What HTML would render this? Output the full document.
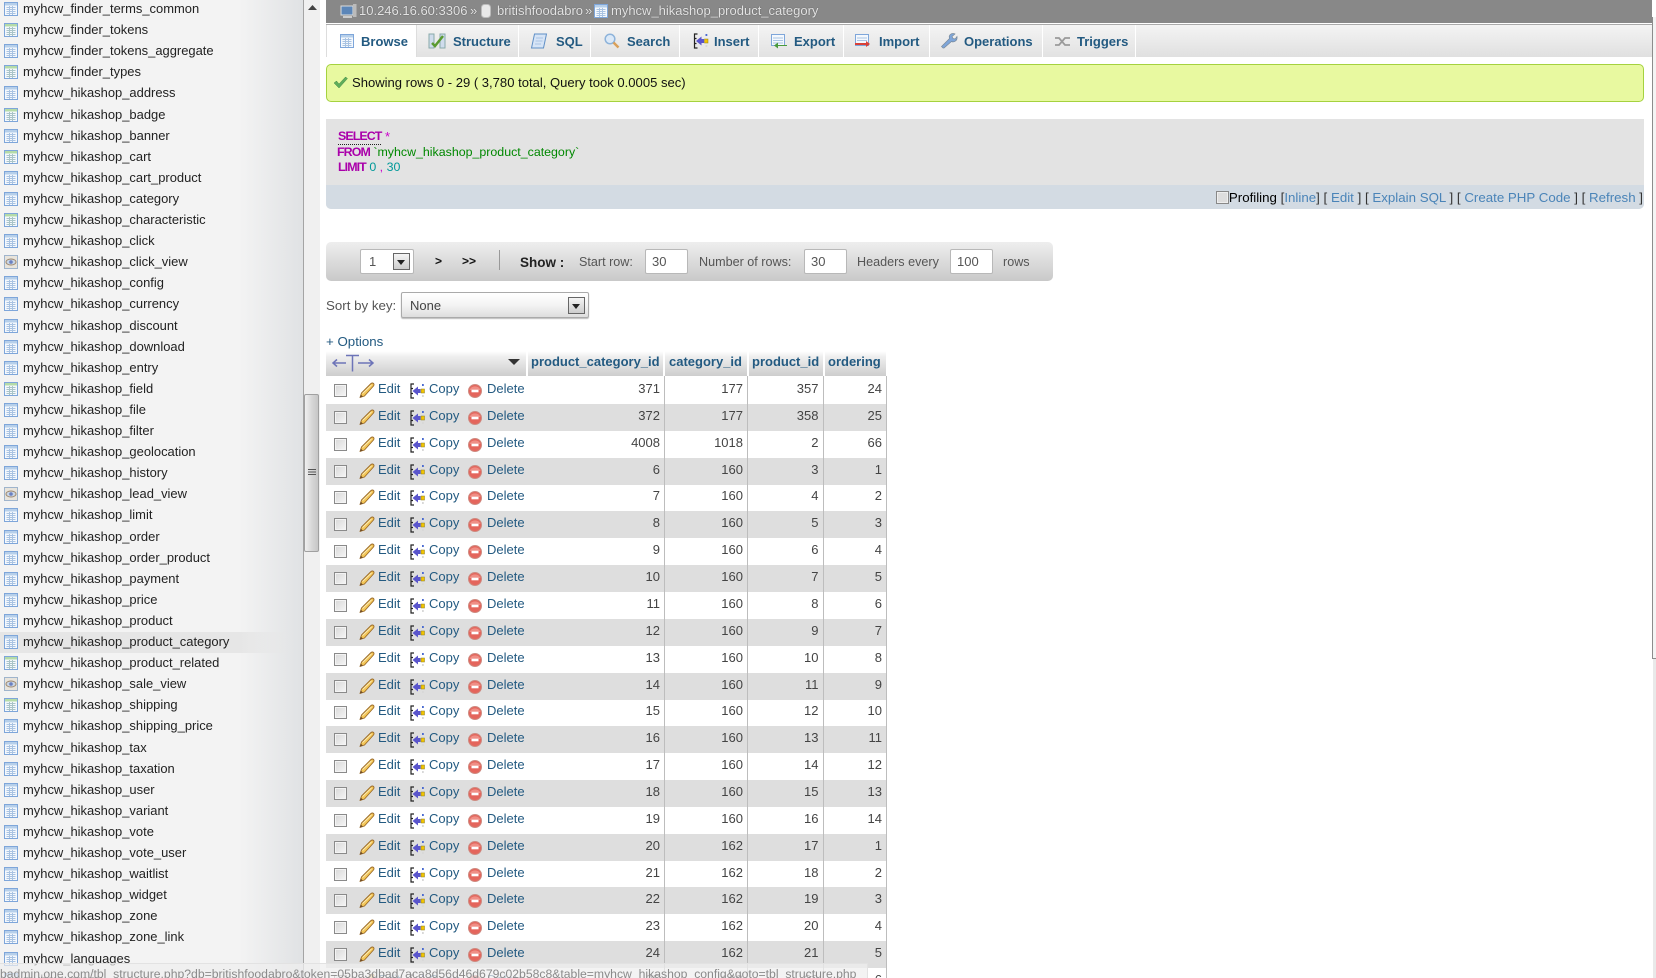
<!DOCTYPE html>
<html><head><meta charset="utf-8"><title>phpMyAdmin</title>
<style>
*{box-sizing:border-box}
html,body{margin:0;padding:0;width:1656px;height:978px;overflow:hidden;background:#fff}
body{position:relative;font:13px/15px "Liberation Sans",Arial,sans-serif;color:#444}
svg{position:absolute;overflow:visible}
.a{position:absolute;white-space:nowrap}
#side{position:absolute;left:0;top:0;width:304px;height:978px;background:linear-gradient(90deg,#f3f3f3 0,#f3f3f3 240px,#e0e2e4 303px);border-right:1px solid #a4a4a4;overflow:hidden}
#side .s{position:absolute;left:23px;color:#222;white-space:nowrap;height:15px;font-size:12.95px;margin-top:-1px}
#side svg{left:4px;width:14px;height:14px}
#hl{position:absolute;left:0;top:632px;width:295px;height:21px;background:linear-gradient(90deg,#e6e6e6 0,#e6e6e6 240px,rgba(230,230,230,0) 295px)}
#sb{position:absolute;left:304px;top:0;width:16px;height:978px;background:#f0f0f0}
#th{position:absolute;left:304px;top:394px;width:15px;height:158px;border:1px solid #a0a0a0;border-radius:2px;background:linear-gradient(90deg,#f0f0f0,#d8d8d8 50%,#c6c6c6)}
#topb{position:absolute;left:326px;top:0;width:1326px;height:23px;background:#888}
#topl{position:absolute;left:326px;top:23px;width:1326px;height:2px;background:#fff;border-bottom:1px solid #aaa}
#tabs{position:absolute;left:326px;top:25px;width:1326px;height:32px;background:linear-gradient(#f4f4f4,#e0e0e0)}
.tb{position:absolute;top:25px;height:32px;background:linear-gradient(#f4f4f4,#e2e2e2);border-right:1px solid #fff}
.tt{position:absolute;top:34px;font-weight:bold;color:#235a81;white-space:nowrap}
.ti{position:absolute;top:33px;width:16px;height:16px}
.w{color:#e4e4e4;text-shadow:0 0 1px #444;top:3px}
#ok{position:absolute;left:326px;top:64px;width:1318px;height:38px;background:#e8f9a0;border:1px solid #a5d23f;border-radius:5px}
#sq{position:absolute;left:326px;top:119px;width:1318px;height:90px;background:#e3e3e3;border-radius:0 0 5px 5px;overflow:hidden}
#sq div{position:absolute;left:0;top:66px;width:100%;height:24px;background:#d3dbe3}
.kw{color:#a0a;font-weight:bold;letter-spacing:-.9px}
.lk{color:#4a84b8}
.br{color:#333}
#nav{position:absolute;left:326px;top:242px;width:727px;height:39px;border-radius:5px;background:linear-gradient(#eee,#c9c9c9)}
.in{position:absolute;top:249px;height:25px;background:#fff;border:1px solid #b8b8b8;border-radius:2px;color:#555;padding:4px 0 0 6px;width:43px}
.ar{position:absolute;background:linear-gradient(#f4f4f4,#ccc);border:1px solid #666}
.ar:after{content:"";position:absolute;left:3px;top:6px;border:4px solid transparent;border-top:5px solid #222;border-bottom:0}
.ne{color:#555;font-size:12.6px}
#hd{position:absolute;left:326px;top:351px;width:560px;height:25px;background:linear-gradient(#fff,#f0f0f0 20%,#cdcdcd)}
.ht{position:absolute;top:354px;font-weight:bold;color:#235a81;white-space:nowrap}
.vs{position:absolute;top:351px;width:2px;height:25px;background:#fff}
.r{position:absolute;left:326px;width:560px;height:27px}
.g{background:#dedede}
.r>*{position:absolute}
.c{left:8px;top:7px;width:13px;height:13px;border:1px solid #8a8a8a;background:linear-gradient(135deg,#d8d8d8,#f6f6f6);box-shadow:inset 0 0 0 1px #f4f4f4}
.r span{top:4px;color:#235a81;white-space:nowrap}
.r b{font-weight:normal;top:4px;text-align:right;width:80px;color:#444}
.r .e{left:52px}.r .co{left:103px}.r .de{left:161px}
.p{left:33px;top:5px;width:16px;height:16px}
.y{left:84px;top:6px;width:15px;height:16px}
.x{left:142px;top:7px;width:14px;height:14px}
.n1{left:254px}.n2{left:337px}.n3{left:412.5px}.n4{left:476px}
.cl{position:absolute;top:376px;width:1px;height:602px;background:#bdbdbd}
#st{position:absolute;left:0;top:963px;width:868px;height:15px;background:rgba(238,238,238,.72);border-top:1px solid #e2e2e2;border-right:1px solid #e2e2e2;color:#8a8a8a;overflow:hidden;white-space:nowrap;font-size:12.2px}
#st span{position:absolute;left:0;top:3px}
</style></head><body>
<svg width="0" height="0" style="position:absolute"><defs>
<symbol id="t" viewBox="0 0 14 14"><rect x=".5" y=".5" width="13" height="13" fill="#f4f8fd" stroke="#7ea6da"/><rect x="1" y="1" width="12" height="2.5" fill="#b6cfea"/><path d="M2.5 5.5h9M2.5 7.5h9M2.5 9.5h9M2.5 11.5h9M5.5 4v9M8.5 4v9" stroke="#a9c3e2" fill="none"/></symbol>
<symbol id="tg" viewBox="0 0 14 14"><rect x=".5" y=".5" width="13" height="13" fill="#f4f8fd" stroke="#7ea6da"/><rect x="1" y="1" width="12" height="2.5" fill="#b4dba8"/><path d="M2.5 5.5h9M2.5 7.5h9M2.5 9.5h9M2.5 11.5h9M5.5 4v9M8.5 4v9" stroke="#a9c4c8" fill="none"/></symbol>
<symbol id="v" viewBox="0 0 14 14"><rect x=".5" y=".5" width="13" height="13" fill="#e8e4dc" stroke="#9fb4cc"/><ellipse cx="7" cy="7" rx="5" ry="3" fill="#c9d6e6" stroke="#a08a70"/><circle cx="7" cy="7" r="1.8" fill="#6a7fc0"/></symbol>
<symbol id="p" viewBox="0 0 16 16"><path d="M1 15.500l1.500-4.500L12 1.500q1.500-1 2.500 0t0 2.500L5.500 14z" fill="#f3c658" stroke="#9a6a28" stroke-width=".9" stroke-linejoin="round"/><path d="M3.500 11.500L12.500 3" stroke="#fbeab4" fill="none"/><path d="M1 15.500l.9-2.800 1.900 1.700z" fill="#6b4a28"/></symbol>
<symbol id="y" viewBox="0 0 15 16"><path d="M4 1H1v14h3M1 5.500h2M1 10.500h2" stroke="#222" fill="none" stroke-width="1.2"/><path d="M2.500 8L8 3.500V6h2.500v4H8v2.500z" fill="#5a55cc"/><rect x="11" y="6" width="3.500" height="4" fill="#f2c400" stroke="#8a7a20" stroke-width=".5"/><rect x="12" y="1" width="1.800" height="2" fill="#4a6ad0"/><rect x="12" y="12" width="1.800" height="2" fill="#d8d8d8"/></symbol>
<symbol id="x" viewBox="0 0 14 14"><circle cx="7" cy="7" r="6.500" fill="#e4655c" stroke="#ce8a80"/><path d="M1.500 6a6 6 0 0 1 11 0z" fill="#ef8f86"/><rect x="3.500" y="5.700" width="7" height="2.600" fill="#fff"/></symbol>
</defs></svg>

<div id="side"><div id="hl"></div>
<svg style="top:2px"><use href="#t"/></svg><div class="s" style="top:2px">myhcw_finder_terms_common</div>
<svg style="top:23px"><use href="#tg"/></svg><div class="s" style="top:23px">myhcw_finder_tokens</div>
<svg style="top:44px"><use href="#t"/></svg><div class="s" style="top:44px">myhcw_finder_tokens_aggregate</div>
<svg style="top:65px"><use href="#tg"/></svg><div class="s" style="top:65px">myhcw_finder_types</div>
<svg style="top:86px"><use href="#t"/></svg><div class="s" style="top:86px">myhcw_hikashop_address</div>
<svg style="top:108px"><use href="#tg"/></svg><div class="s" style="top:108px">myhcw_hikashop_badge</div>
<svg style="top:129px"><use href="#t"/></svg><div class="s" style="top:129px">myhcw_hikashop_banner</div>
<svg style="top:150px"><use href="#tg"/></svg><div class="s" style="top:150px">myhcw_hikashop_cart</div>
<svg style="top:171px"><use href="#t"/></svg><div class="s" style="top:171px">myhcw_hikashop_cart_product</div>
<svg style="top:192px"><use href="#t"/></svg><div class="s" style="top:192px">myhcw_hikashop_category</div>
<svg style="top:213px"><use href="#tg"/></svg><div class="s" style="top:213px">myhcw_hikashop_characteristic</div>
<svg style="top:234px"><use href="#t"/></svg><div class="s" style="top:234px">myhcw_hikashop_click</div>
<svg style="top:255px"><use href="#v"/></svg><div class="s" style="top:255px">myhcw_hikashop_click_view</div>
<svg style="top:276px"><use href="#t"/></svg><div class="s" style="top:276px">myhcw_hikashop_config</div>
<svg style="top:297px"><use href="#t"/></svg><div class="s" style="top:297px">myhcw_hikashop_currency</div>
<svg style="top:319px"><use href="#t"/></svg><div class="s" style="top:319px">myhcw_hikashop_discount</div>
<svg style="top:340px"><use href="#t"/></svg><div class="s" style="top:340px">myhcw_hikashop_download</div>
<svg style="top:361px"><use href="#t"/></svg><div class="s" style="top:361px">myhcw_hikashop_entry</div>
<svg style="top:382px"><use href="#tg"/></svg><div class="s" style="top:382px">myhcw_hikashop_field</div>
<svg style="top:403px"><use href="#t"/></svg><div class="s" style="top:403px">myhcw_hikashop_file</div>
<svg style="top:424px"><use href="#t"/></svg><div class="s" style="top:424px">myhcw_hikashop_filter</div>
<svg style="top:445px"><use href="#t"/></svg><div class="s" style="top:445px">myhcw_hikashop_geolocation</div>
<svg style="top:466px"><use href="#t"/></svg><div class="s" style="top:466px">myhcw_hikashop_history</div>
<svg style="top:487px"><use href="#v"/></svg><div class="s" style="top:487px">myhcw_hikashop_lead_view</div>
<svg style="top:508px"><use href="#t"/></svg><div class="s" style="top:508px">myhcw_hikashop_limit</div>
<svg style="top:530px"><use href="#t"/></svg><div class="s" style="top:530px">myhcw_hikashop_order</div>
<svg style="top:551px"><use href="#t"/></svg><div class="s" style="top:551px">myhcw_hikashop_order_product</div>
<svg style="top:572px"><use href="#t"/></svg><div class="s" style="top:572px">myhcw_hikashop_payment</div>
<svg style="top:593px"><use href="#t"/></svg><div class="s" style="top:593px">myhcw_hikashop_price</div>
<svg style="top:614px"><use href="#t"/></svg><div class="s" style="top:614px">myhcw_hikashop_product</div>
<svg style="top:635px"><use href="#t"/></svg><div class="s" style="top:635px">myhcw_hikashop_product_category</div>
<svg style="top:656px"><use href="#tg"/></svg><div class="s" style="top:656px">myhcw_hikashop_product_related</div>
<svg style="top:677px"><use href="#v"/></svg><div class="s" style="top:677px">myhcw_hikashop_sale_view</div>
<svg style="top:698px"><use href="#tg"/></svg><div class="s" style="top:698px">myhcw_hikashop_shipping</div>
<svg style="top:719px"><use href="#t"/></svg><div class="s" style="top:719px">myhcw_hikashop_shipping_price</div>
<svg style="top:741px"><use href="#t"/></svg><div class="s" style="top:741px">myhcw_hikashop_tax</div>
<svg style="top:762px"><use href="#t"/></svg><div class="s" style="top:762px">myhcw_hikashop_taxation</div>
<svg style="top:783px"><use href="#t"/></svg><div class="s" style="top:783px">myhcw_hikashop_user</div>
<svg style="top:804px"><use href="#t"/></svg><div class="s" style="top:804px">myhcw_hikashop_variant</div>
<svg style="top:825px"><use href="#t"/></svg><div class="s" style="top:825px">myhcw_hikashop_vote</div>
<svg style="top:846px"><use href="#t"/></svg><div class="s" style="top:846px">myhcw_hikashop_vote_user</div>
<svg style="top:867px"><use href="#t"/></svg><div class="s" style="top:867px">myhcw_hikashop_waitlist</div>
<svg style="top:888px"><use href="#t"/></svg><div class="s" style="top:888px">myhcw_hikashop_widget</div>
<svg style="top:909px"><use href="#t"/></svg><div class="s" style="top:909px">myhcw_hikashop_zone</div>
<svg style="top:930px"><use href="#t"/></svg><div class="s" style="top:930px">myhcw_hikashop_zone_link</div>
<svg style="top:952px"><use href="#t"/></svg><div class="s" style="top:952px">myhcw_languages</div>
<svg style="top:973px"><use href="#t"/></svg><div class="s" style="top:973px">myhcw_menu</div>
</div>
<div id="sb"></div>
<svg style="left:308px;top:5px" width="9" height="6"><path d="M0 5L4.500 0 9 5z" fill="#444"/></svg>
<div id="th"></div>
<svg style="left:308px;top:469px" width="8" height="8"><path d="M0 .5h8M0 3h8M0 5.500h8" stroke="#555" fill="none"/></svg>

<div id="topb"></div><div id="topl"></div>
<svg style="left:340px;top:3px" width="17" height="16"><rect x="1" y="3" width="12" height="9" fill="#5c86b8" stroke="#ddd"/><rect x="13" y="1" width="3.500" height="13" fill="#bbb"/><rect x="3" y="13" width="9" height="2" fill="#ccc"/></svg>
<div class="a w" style="left:359px">10.246.16.60:3306</div><div class="a w" style="left:470px">»</div>
<svg style="left:481px;top:4px" width="10" height="14"><rect x=".5" y=".5" width="9" height="13" rx="3" fill="#e8e8e8" stroke="#bbb"/></svg>
<div class="a w" style="left:497px">britishfoodabro</div><div class="a w" style="left:585px">»</div>
<svg style="left:594px;top:4px;width:14px;height:14px"><use href="#t"/></svg>
<div class="a w" style="left:611px">myhcw_hikashop_product_category</div>

<div id="tabs"></div>
<div style="position:absolute;left:326px;top:25px;width:91px;height:32px;background:#fff;border-left:1px solid #ddd;border-right:1px solid #ddd"></div>
<div class="tb" style="left:417px;width:102px"></div><div class="tb" style="left:519px;width:72px"></div><div class="tb" style="left:591px;width:89px"></div><div class="tb" style="left:680px;width:79px"></div><div class="tb" style="left:759px;width:85px"></div><div class="tb" style="left:844px;width:86px"></div><div class="tb" style="left:930px;width:113px"></div><div class="tb" style="left:1043px;width:93px"></div>
<svg class="ti" style="left:340px;width:14px;height:14px;top:34px"><use href="#t"/></svg><div class="tt" style="left:361px">Browse</div>
<svg class="ti" style="left:429px"><rect x="0" y="1" width="5" height="14" fill="#cfdcec" stroke="#8aa"/><rect x="11" y="1" width="5" height="14" fill="#cfdcec" stroke="#8aa"/><path d="M3 10l3 3 8-10" stroke="#5a9a30" stroke-width="2.500" fill="none"/></svg><div class="tt" style="left:453px">Structure</div>
<svg class="ti" style="left:531px"><path d="M3.500 1h12l-3 14H.5z" fill="#d6e4f6" stroke="#5f8fc6"/><path d="M5 5h7M4.500 8h7M4 11h6" stroke="#a9c4e4" fill="none"/></svg><div class="tt" style="left:556px">SQL</div>
<svg class="ti" style="left:604px"><circle cx="6" cy="6" r="4.800" fill="#dbe9f8" stroke="#8db3da" stroke-width="1.500"/><path d="M9.500 9.500L14.500 14.500" stroke="#d9a05a" stroke-width="2.500"/></svg><div class="tt" style="left:627px">Search</div>
<svg class="ti" style="left:693px"><use href="#y"/></svg><div class="tt" style="left:714px">Insert</div>
<svg class="ti" style="left:771px"><rect x=".5" y="1.500" width="13" height="11" fill="#f4f8fd" stroke="#7ea6da"/><path d="M2 5h10M2 7.500h10M2 10h10" stroke="#a9c4e4" fill="none"/><path d="M16 12H7v-2.500L3 12.500 7 15.500V13h9z" fill="#4a9a3c"/></svg><div class="tt" style="left:794px">Export</div>
<svg class="ti" style="left:855px"><rect x=".5" y="1.500" width="13" height="11" fill="#f4f8fd" stroke="#7ea6da"/><path d="M2 5h10M2 7.500h10" stroke="#a9c4e4" fill="none"/><path d="M0 10h11v-2l4 3-4 3v-2H0z" fill="#d84038"/></svg><div class="tt" style="left:879px">Import</div>
<svg class="ti" style="left:941px"><path d="M2 15l-1.500-1.500 8-8q-1-3 1.500-4.500 2-1 4 0l-3 2.500 1 2 2.200.500 1.800-2.500q.5 3-1.500 4.500-2 1.500-4 .5l-7.500 6.500z" fill="#7ea6da" stroke="#7a8a9a" stroke-width=".7"/></svg><div class="tt" style="left:964px">Operations</div>
<svg class="ti" style="left:1055px"><path d="M0 5h4l6 7h5M0 12h4l6-7h5" stroke="#9a9a9a" stroke-width="1.800" fill="none"/></svg><div class="tt" style="left:1077px">Triggers</div>

<div id="ok"></div>
<svg style="left:333px;top:75px" width="15" height="15"><path d="M1 8l2.500-2 2.500 3L12.500 2l2 1.500L6 13z" fill="#5fae5a" stroke="#4a8a4a" stroke-width=".5"/></svg>
<div class="a" style="left:352px;top:75px;color:#111;font-size:13.05px">Showing rows 0 - 29 ( 3,780 total, Query took 0.0005 sec)</div>

<div id="sq"><div></div></div>
<div class="a kw" style="left:338px;top:129px;border-bottom:1px dotted #222;line-height:15px;height:16px;font-size:12.4px">SELECT</div><div class="a" style="left:385px;top:129px;color:#c0c">*</div>
<div class="a" style="left:337px;top:145px;font-size:12.4px"><span class="kw">FROM</span> <span style="color:#080">`myhcw_hikashop_product_category`</span></div>
<div class="a" style="left:338px;top:160px;font-size:12.4px"><span class="kw">LIMIT</span> <span style="color:#099">0</span> <span style="color:#c0c">,</span> <span style="color:#099">30</span></div>
<svg style="left:1216px;top:191px" width="13" height="13"><rect x=".5" y=".5" width="12" height="12" fill="#eee" stroke="#888"/><rect x="2" y="2" width="9" height="9" fill="#ddd"/></svg>
<div class="a" style="right:13px;top:190px;color:#111;font-size:13.3px"><span style="color:#000">Profiling</span> <span class="br">[</span><span class="lk">Inline</span><span class="br">]</span> <span class="br">[</span> <span class="lk">Edit</span> <span class="br">]</span> <span class="br">[</span> <span class="lk">Explain SQL</span> <span class="br">]</span> <span class="br">[</span> <span class="lk">Create PHP Code</span> <span class="br">]</span> <span class="br">[</span> <span class="lk">Refresh</span> <span class="br">]</span></div>

<div id="nav"></div>
<div class="in" style="left:360px;width:54px;padding-left:8px">1</div><div class="ar" style="left:393px;top:253px;width:17px;height:17px"></div>
<div class="a" style="left:435px;top:254px;color:#111;font-weight:bold;font-size:12px">&gt;</div><div class="a" style="left:462px;top:254px;color:#111;font-weight:bold;font-size:12px">&gt;&gt;</div>
<div style="position:absolute;left:499px;top:250px;width:1px;height:20px;background:#999"></div>
<div class="a" style="left:520px;top:255px;font-weight:bold;color:#222;font-size:13.5px">Show :</div>
<div class="a ne" style="left:579px;top:255px">Start row:</div><div class="in" style="left:645px">30</div>
<div class="a ne" style="left:699px;top:255px">Number of rows:</div><div class="in" style="left:804px">30</div>
<div class="a ne" style="left:857px;top:255px">Headers every</div><div class="in" style="left:950px">100</div>
<div class="a ne" style="left:1003px;top:255px">rows</div>
<div class="a ne" style="left:326px;top:298px;font-size:13.3px">Sort by key:</div>
<div class="in" style="left:401px;top:292px;width:188px;height:26px;padding:5px 0 0 8px;background:linear-gradient(#fff,#f4f4f4 50%,#ddd);border-color:#aaa;box-shadow:0 1px 1px #bbb;color:#444">None</div><div class="ar" style="left:568px;top:297px;width:17px;height:17px"></div>
<div class="a" style="left:326px;top:334px;color:#235a81;font-size:13.3px">+ Options</div>

<div id="hd"></div><div class="vs" style="left:526px"></div><div class="vs" style="left:663px"></div><div class="vs" style="left:747px"></div><div class="vs" style="left:823px"></div>
<svg style="left:332px;top:353px" width="48" height="20"><path d="M1 10h13M5 6.500L1 10l4 3.500M26 10h15M37 6.500l4 3.500-4 3.500M14 2.500h13M20.500 2.500v16" stroke="#6d74b8" stroke-width="1.500" fill="none"/></svg>
<svg style="left:508px;top:359px" width="12" height="6"><path d="M0 0h12L6 6z" fill="#333"/></svg>
<div class="ht" style="left:531px">product_category_id</div><div class="ht" style="left:669px">category_id</div><div class="ht" style="left:752px">product_id</div><div class="ht" style="left:828px">ordering</div>

<div class="r" style="top:377px"><i class="c"></i><svg class="p"><use href="#p"/></svg><span class="e">Edit</span><svg class="y"><use href="#y"/></svg><span class="co">Copy</span><svg class="x"><use href="#x"/></svg><span class="de">Delete</span><b class="n1">371</b><b class="n2">177</b><b class="n3">357</b><b class="n4">24</b></div>
<div class="r g" style="top:403.9px"><i class="c"></i><svg class="p"><use href="#p"/></svg><span class="e">Edit</span><svg class="y"><use href="#y"/></svg><span class="co">Copy</span><svg class="x"><use href="#x"/></svg><span class="de">Delete</span><b class="n1">372</b><b class="n2">177</b><b class="n3">358</b><b class="n4">25</b></div>
<div class="r" style="top:430.7px"><i class="c"></i><svg class="p"><use href="#p"/></svg><span class="e">Edit</span><svg class="y"><use href="#y"/></svg><span class="co">Copy</span><svg class="x"><use href="#x"/></svg><span class="de">Delete</span><b class="n1">4008</b><b class="n2">1018</b><b class="n3">2</b><b class="n4">66</b></div>
<div class="r g" style="top:457.6px"><i class="c"></i><svg class="p"><use href="#p"/></svg><span class="e">Edit</span><svg class="y"><use href="#y"/></svg><span class="co">Copy</span><svg class="x"><use href="#x"/></svg><span class="de">Delete</span><b class="n1">6</b><b class="n2">160</b><b class="n3">3</b><b class="n4">1</b></div>
<div class="r" style="top:484.4px"><i class="c"></i><svg class="p"><use href="#p"/></svg><span class="e">Edit</span><svg class="y"><use href="#y"/></svg><span class="co">Copy</span><svg class="x"><use href="#x"/></svg><span class="de">Delete</span><b class="n1">7</b><b class="n2">160</b><b class="n3">4</b><b class="n4">2</b></div>
<div class="r g" style="top:511.3px"><i class="c"></i><svg class="p"><use href="#p"/></svg><span class="e">Edit</span><svg class="y"><use href="#y"/></svg><span class="co">Copy</span><svg class="x"><use href="#x"/></svg><span class="de">Delete</span><b class="n1">8</b><b class="n2">160</b><b class="n3">5</b><b class="n4">3</b></div>
<div class="r" style="top:538.2px"><i class="c"></i><svg class="p"><use href="#p"/></svg><span class="e">Edit</span><svg class="y"><use href="#y"/></svg><span class="co">Copy</span><svg class="x"><use href="#x"/></svg><span class="de">Delete</span><b class="n1">9</b><b class="n2">160</b><b class="n3">6</b><b class="n4">4</b></div>
<div class="r g" style="top:565px"><i class="c"></i><svg class="p"><use href="#p"/></svg><span class="e">Edit</span><svg class="y"><use href="#y"/></svg><span class="co">Copy</span><svg class="x"><use href="#x"/></svg><span class="de">Delete</span><b class="n1">10</b><b class="n2">160</b><b class="n3">7</b><b class="n4">5</b></div>
<div class="r" style="top:591.9px"><i class="c"></i><svg class="p"><use href="#p"/></svg><span class="e">Edit</span><svg class="y"><use href="#y"/></svg><span class="co">Copy</span><svg class="x"><use href="#x"/></svg><span class="de">Delete</span><b class="n1">11</b><b class="n2">160</b><b class="n3">8</b><b class="n4">6</b></div>
<div class="r g" style="top:618.7px"><i class="c"></i><svg class="p"><use href="#p"/></svg><span class="e">Edit</span><svg class="y"><use href="#y"/></svg><span class="co">Copy</span><svg class="x"><use href="#x"/></svg><span class="de">Delete</span><b class="n1">12</b><b class="n2">160</b><b class="n3">9</b><b class="n4">7</b></div>
<div class="r" style="top:645.6px"><i class="c"></i><svg class="p"><use href="#p"/></svg><span class="e">Edit</span><svg class="y"><use href="#y"/></svg><span class="co">Copy</span><svg class="x"><use href="#x"/></svg><span class="de">Delete</span><b class="n1">13</b><b class="n2">160</b><b class="n3">10</b><b class="n4">8</b></div>
<div class="r g" style="top:672.5px"><i class="c"></i><svg class="p"><use href="#p"/></svg><span class="e">Edit</span><svg class="y"><use href="#y"/></svg><span class="co">Copy</span><svg class="x"><use href="#x"/></svg><span class="de">Delete</span><b class="n1">14</b><b class="n2">160</b><b class="n3">11</b><b class="n4">9</b></div>
<div class="r" style="top:699.3px"><i class="c"></i><svg class="p"><use href="#p"/></svg><span class="e">Edit</span><svg class="y"><use href="#y"/></svg><span class="co">Copy</span><svg class="x"><use href="#x"/></svg><span class="de">Delete</span><b class="n1">15</b><b class="n2">160</b><b class="n3">12</b><b class="n4">10</b></div>
<div class="r g" style="top:726.2px"><i class="c"></i><svg class="p"><use href="#p"/></svg><span class="e">Edit</span><svg class="y"><use href="#y"/></svg><span class="co">Copy</span><svg class="x"><use href="#x"/></svg><span class="de">Delete</span><b class="n1">16</b><b class="n2">160</b><b class="n3">13</b><b class="n4">11</b></div>
<div class="r" style="top:753px"><i class="c"></i><svg class="p"><use href="#p"/></svg><span class="e">Edit</span><svg class="y"><use href="#y"/></svg><span class="co">Copy</span><svg class="x"><use href="#x"/></svg><span class="de">Delete</span><b class="n1">17</b><b class="n2">160</b><b class="n3">14</b><b class="n4">12</b></div>
<div class="r g" style="top:779.9px"><i class="c"></i><svg class="p"><use href="#p"/></svg><span class="e">Edit</span><svg class="y"><use href="#y"/></svg><span class="co">Copy</span><svg class="x"><use href="#x"/></svg><span class="de">Delete</span><b class="n1">18</b><b class="n2">160</b><b class="n3">15</b><b class="n4">13</b></div>
<div class="r" style="top:806.8px"><i class="c"></i><svg class="p"><use href="#p"/></svg><span class="e">Edit</span><svg class="y"><use href="#y"/></svg><span class="co">Copy</span><svg class="x"><use href="#x"/></svg><span class="de">Delete</span><b class="n1">19</b><b class="n2">160</b><b class="n3">16</b><b class="n4">14</b></div>
<div class="r g" style="top:833.6px"><i class="c"></i><svg class="p"><use href="#p"/></svg><span class="e">Edit</span><svg class="y"><use href="#y"/></svg><span class="co">Copy</span><svg class="x"><use href="#x"/></svg><span class="de">Delete</span><b class="n1">20</b><b class="n2">162</b><b class="n3">17</b><b class="n4">1</b></div>
<div class="r" style="top:860.5px"><i class="c"></i><svg class="p"><use href="#p"/></svg><span class="e">Edit</span><svg class="y"><use href="#y"/></svg><span class="co">Copy</span><svg class="x"><use href="#x"/></svg><span class="de">Delete</span><b class="n1">21</b><b class="n2">162</b><b class="n3">18</b><b class="n4">2</b></div>
<div class="r g" style="top:887.3px"><i class="c"></i><svg class="p"><use href="#p"/></svg><span class="e">Edit</span><svg class="y"><use href="#y"/></svg><span class="co">Copy</span><svg class="x"><use href="#x"/></svg><span class="de">Delete</span><b class="n1">22</b><b class="n2">162</b><b class="n3">19</b><b class="n4">3</b></div>
<div class="r" style="top:914.2px"><i class="c"></i><svg class="p"><use href="#p"/></svg><span class="e">Edit</span><svg class="y"><use href="#y"/></svg><span class="co">Copy</span><svg class="x"><use href="#x"/></svg><span class="de">Delete</span><b class="n1">23</b><b class="n2">162</b><b class="n3">20</b><b class="n4">4</b></div>
<div class="r g" style="top:941px"><i class="c"></i><svg class="p"><use href="#p"/></svg><span class="e">Edit</span><svg class="y"><use href="#y"/></svg><span class="co">Copy</span><svg class="x"><use href="#x"/></svg><span class="de">Delete</span><b class="n1">24</b><b class="n2">162</b><b class="n3">21</b><b class="n4">5</b></div>
<div class="r" style="top:967.9px"><i class="c"></i><svg class="p"><use href="#p"/></svg><span class="e">Edit</span><svg class="y"><use href="#y"/></svg><span class="co">Copy</span><svg class="x"><use href="#x"/></svg><span class="de">Delete</span><b class="n1">25</b><b class="n2">162</b><b class="n3">22</b><b class="n4">6</b></div>
<div class="cl" style="left:664px"></div><div class="cl" style="left:747px"></div><div class="cl" style="left:823px"></div><div class="cl" style="left:886px"></div>

<div id="st"><span>badmin.one.com/tbl_structure.php?db=britishfoodabro&amp;token=05ba3dbad7aca8d56d46d679c02b58c8&amp;table=myhcw_hikashop_config&amp;goto=tbl_structure.php</span></div>

<div style="position:absolute;left:1652px;top:17px;width:4px;height:642px;border-left:1px solid #8c8c8c;border-bottom:1px solid #8c8c8c;background:#f4f4f4"></div>
<div style="position:absolute;left:1653px;top:659px;width:3px;height:319px;background:#e9e9e9"></div>
</body></html>
